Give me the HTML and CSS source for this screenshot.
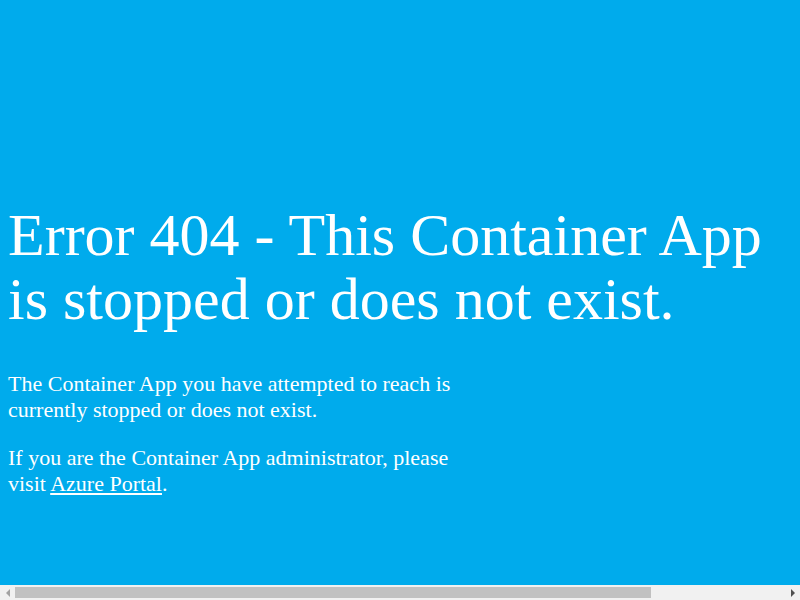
FILE: index.html
```html
<!DOCTYPE html>
<html>
<head>
    <title>Error 404 - Container App</title>
    <link rel="stylesheet" href="styles.css">
</head>
<body>
    <div class="page">
        <h1 class="title">Error 404 - This Container App is stopped or does not exist.</h1>
        <p class="message">The Container App you have attempted to reach is currently stopped or does not exist.</p>
        <p class="message">If you are the Container App administrator, please visit <a href="#">Azure Portal</a>.</p>
    </div>
    <div class="hscroll" aria-hidden="true">
        <span class="arrow left"></span>
        <div class="track"><div class="thumb"></div></div>
        <span class="arrow right"></span>
    </div>
</body>
</html>
```
FILE: styles.css
```css
html {
    background-color: #00abec;
}
body {
    margin: 0;
    padding: 8px;
    font-family: "Liberation Serif", "Times New Roman", serif;
    color: white;
    background-color: #00abec;
}
.page {
    padding-top: 195px;
}
.title {
    max-width: 784px;
    margin: 0 0 40px 0;
    font-size: 60px;
    font-weight: normal;
    line-height: 64px;
}
.message {
    max-width: 470px;
    margin: 0 0 22px 0;
    font-size: 22px;
    line-height: 26px;
}
a {
    color: white;
}

/* bottom scrollbar from the original capture */
.hscroll {
    position: fixed;
    left: 0;
    right: 0;
    bottom: 0;
    height: 15px;
    display: flex;
    align-items: center;
    background-color: #f1f1f1;
}
.arrow {
    width: 15px;
    height: 15px;
    display: flex;
    align-items: center;
    justify-content: center;
}
.arrow::before {
    content: "";
    border-top: 4px solid transparent;
    border-bottom: 4px solid transparent;
}
.arrow.left::before {
    border-right: 4px solid #a3a3a3;
}
.arrow.right::before {
    border-left: 4px solid #505050;
}
.track {
    flex: 1;
    height: 11px;
}
.thumb {
    width: 636px;
    height: 11px;
    background-color: #c1c1c1;
}
```
